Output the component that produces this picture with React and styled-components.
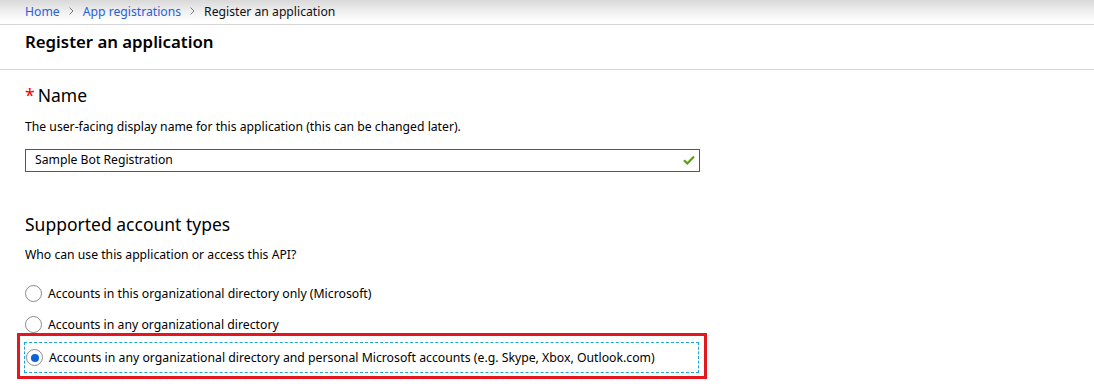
import React from 'react';
import styled, { createGlobalStyle } from 'styled-components';

const GlobalStyle = createGlobalStyle`
    html, body { margin: 0; padding: 0; background: #fff; }
    body { font-family: "Segoe UI", "Noto Sans", sans-serif; color: #000; }
`;

const Page = styled.div`
    width: 1094px;
    height: 387px;
    overflow: hidden;
    background: #fff;
`;

const Breadcrumb = styled.nav`
    height: 25px;
    display: flex;
    align-items: center;
    gap: 9px;
    padding: 0 0 2px 25px;
    box-sizing: border-box;
    background: linear-gradient(#d9d9d9 0px, #f4f4f4 14px, #fff 22px);
    border-bottom: 1px solid #d6d6d6;
    font-size: 12.2px;
`;

const Crumb = styled.span`
    color: ${p => (p.link ? '#2b5fd9' : '#111')};
`;

const Header = styled.header`
    height: 44px;
    padding-left: 25px;
    border-bottom: 1px solid #d6d6d6;
    display: flex;
    align-items: flex-start;
`;

const Title = styled.h1`
    margin: 5px 0 0;
    font-size: 16.8px;
    font-weight: 600;
    line-height: 24px;
`;

const Content = styled.section`
    padding-left: 25px;
`;

const SectionTitle = styled.h2`
    margin: ${p => p.top}px 0 0;
    font-size: 17.5px;
    font-weight: 400;
    line-height: 24px;
`;

const Required = styled.span`
    color: #e00;
    margin-right: 3px;
`;

const Hint = styled.p`
    margin: ${p => p.top}px 0 0;
    font-size: 12.2px;
    line-height: 18px;
`;

const InputBox = styled.div`
    margin-top: 13px;
    width: 675px;
    height: 23px;
    box-sizing: border-box;
    border: 1px solid #7b3b93;
    display: flex;
    align-items: center;
    justify-content: space-between;
    padding: 0 4px 2px 9px;
    font-size: 12.2px;
`;

const Options = styled.div`
    margin-top: 14px;
    display: flex;
    flex-direction: column;
`;

const Option = styled.label`
    display: flex;
    align-items: center;
    gap: 6px;
    height: 31px;
    font-size: 12.25px;
`;

const Radio = styled.span`
    flex: none;
    width: 17px;
    height: 17px;
    box-sizing: border-box;
    border-radius: 50%;
    border: 1px solid #8a8a8a;
    display: flex;
    align-items: center;
    justify-content: center;
    background: #fff;
    &::after {
        content: '';
        width: 8px;
        height: 8px;
        border-radius: 50%;
        background: ${p => (p.checked ? '#0f62d6' : 'transparent')};
    }
`;

const Highlight = styled.div`
    margin: -7px 0 0 -8px;
    width: 690px;
    height: 46px;
    box-sizing: border-box;
    border: 3px solid #e3171f;
    padding: 6px 5px 0 4px;
`;

const Focus = styled.div`
    height: 31px;
    box-sizing: border-box;
    border: 1px dashed #1aa6dd;
    display: flex;
    align-items: center;
    gap: 6px;
    padding-left: 1px;
    font-size: 12.25px;
`;

const Chevron = () => (
    <svg width="5" height="8" viewBox="0 0 5 8">
        <path d="M0.6 0.6 L4 4 L0.6 7.4" fill="none" stroke="#7a7a7a" strokeWidth="1" />
    </svg>
);

const Check = () => (
    <svg width="12" height="10" viewBox="0 0 12 10">
        <path d="M1 5.2 L4.3 8.4 L11 1.4" fill="none" stroke="#5aa30a" strokeWidth="2.2" />
    </svg>
);

export default function App() {
    return (
        <Page>
            <GlobalStyle />
            <Breadcrumb>
                <Crumb link>Home</Crumb>
                <Chevron />
                <Crumb link>App registrations</Crumb>
                <Chevron />
                <Crumb>Register an application</Crumb>
            </Breadcrumb>
            <Header>
                <Title>Register an application</Title>
            </Header>
            <Content>
                <SectionTitle top={13}>
                    <Required>*</Required>Name
                </SectionTitle>
                <Hint top={11}>The user-facing display name for this application (this can be changed later).</Hint>
                <InputBox>
                    <span>Sample Bot Registration</span>
                    <Check />
                </InputBox>
                <SectionTitle top={40}>Supported account types</SectionTitle>
                <Hint top={10}>Who can use this application or access this API?</Hint>
                <Options>
                    <Option>
                        <Radio />
                        Accounts in this organizational directory only (Microsoft)
                    </Option>
                    <Option>
                        <Radio />
                        Accounts in any organizational directory
                    </Option>
                    <Highlight>
                        <Focus>
                            <Radio checked />
                            Accounts in any organizational directory and personal Microsoft accounts (e.g. Skype, Xbox, Outlook.com)
                        </Focus>
                    </Highlight>
                </Options>
            </Content>
        </Page>
    );
}
